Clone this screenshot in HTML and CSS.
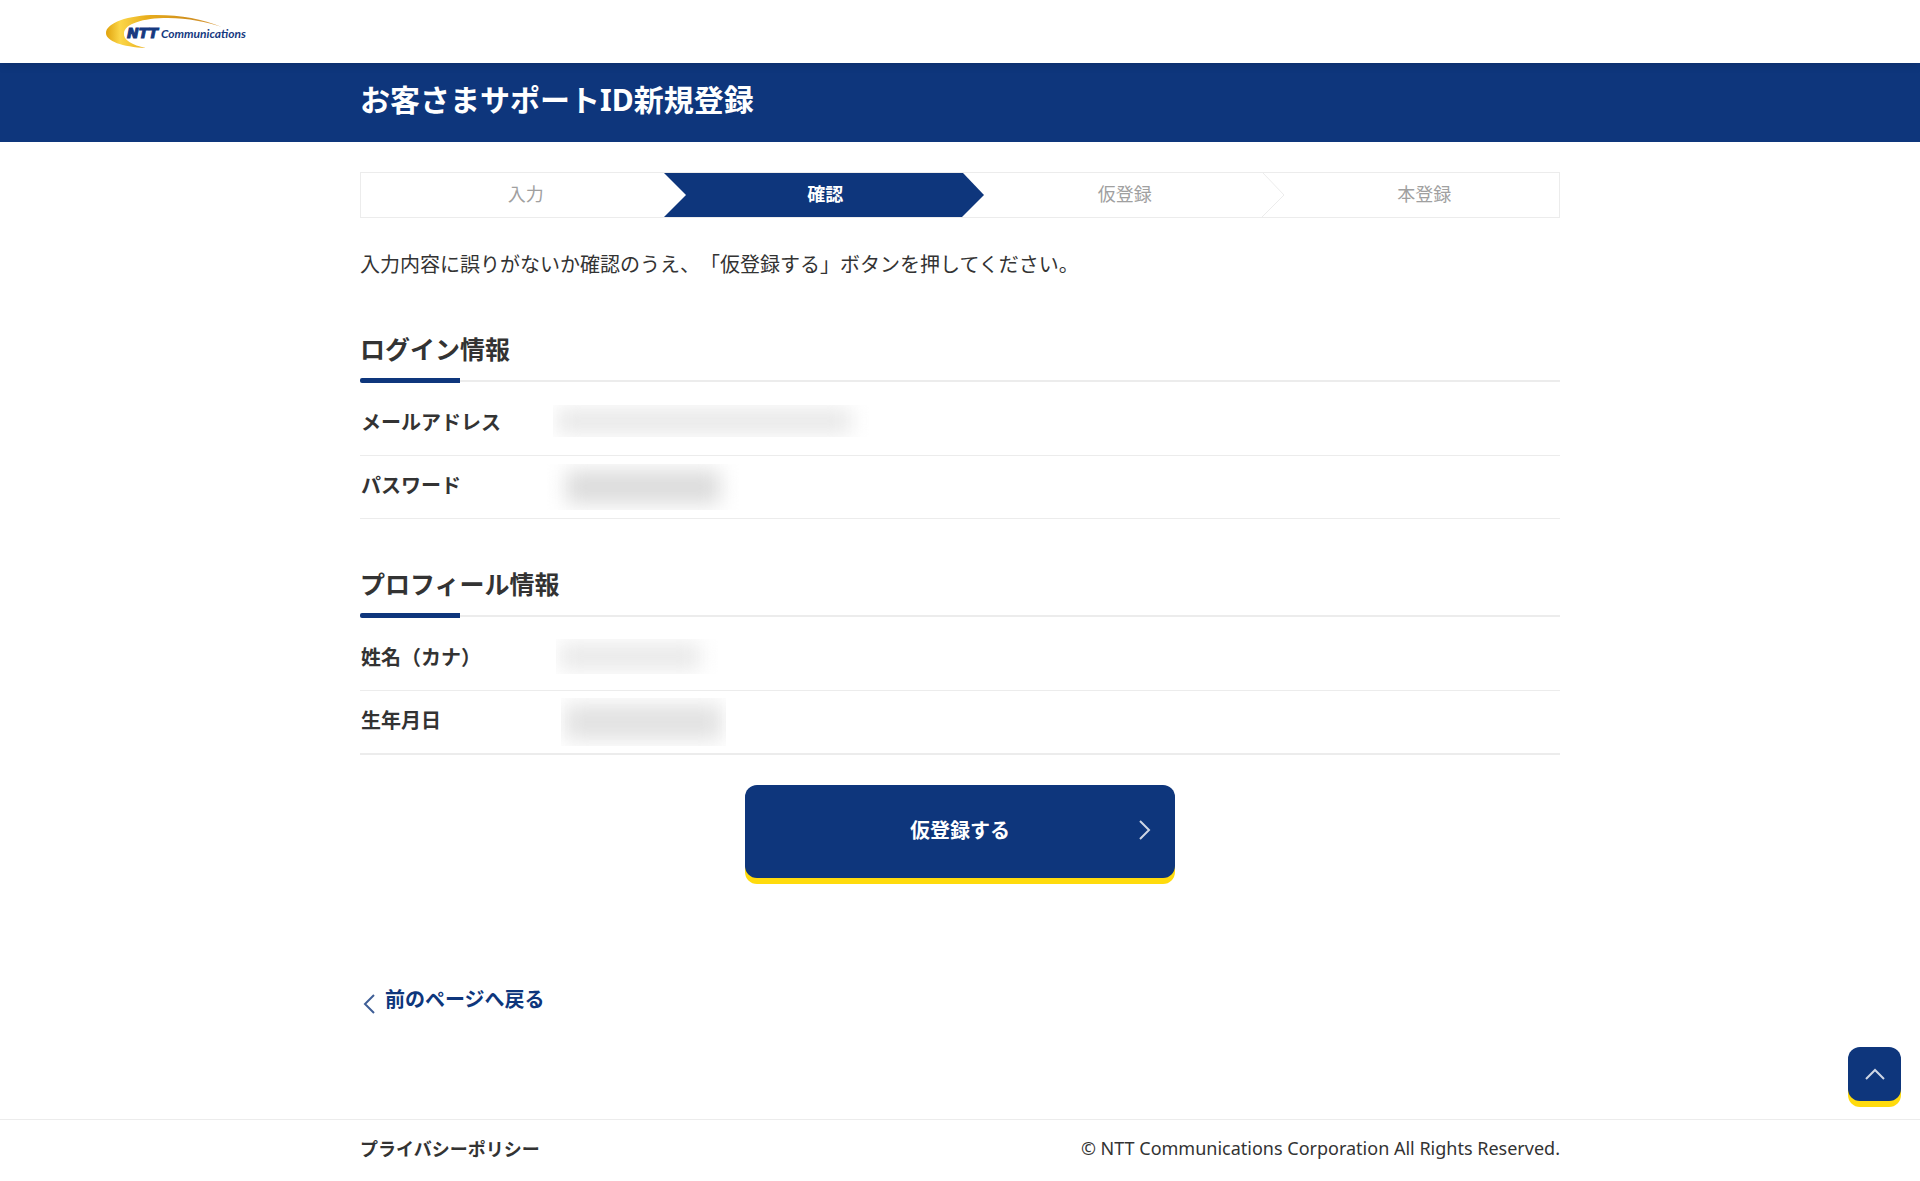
FILE: index.html
```html
<!DOCTYPE html>
<html lang="ja">
<head>
    <meta charset="UTF-8">
    <meta name="viewport" content="width=device-width, initial-scale=1.0">
    <title>お客さまサポートID新規登録</title>
    <link rel="stylesheet" href="styles.css">
</head>
<body>

    <!-- Site Header -->
    <header class="site-header">
        <a href="#" class="logo" aria-label="NTT Communications">
            <svg width="140" height="36" viewBox="0 0 140 36">
                <defs>
                    <linearGradient id="gold" x1="0" y1="0" x2="1" y2="0">
                        <stop offset="0" stop-color="#e0a20c"/>
                        <stop offset="0.12" stop-color="#fbd648"/>
                        <stop offset="0.35" stop-color="#e9ae1c"/>
                        <stop offset="0.7" stop-color="#d08f1c"/>
                        <stop offset="1" stop-color="#dba04a"/>
                    </linearGradient>
                </defs>
                <path fill="url(#gold)" d="M116 13 C96 5 76 1 50 1 C22 1 0 9 0 19 C0 27 16 33 40 34 C26 31 17 26 18 19 C19 10 36 4 62 4 C82 4 101 8 116 13 Z"/>
                <text class="logo-ntt" x="21" y="24">NTT</text>
                <text class="logo-com" x="55" y="24">Communications</text>
            </svg>
        </a>
    </header>

    <!-- Page Title -->
    <div class="page-title">
        <h1 class="inner">お客さまサポートID新規登録</h1>
    </div>

    <main class="inner">
        <!-- Steps -->
        <ol class="steps">
            <li>入力
                <svg class="step-arrow" width="26" height="44" viewBox="0 0 26 44"><path fill="#fff" d="M0 0H3L25 22L3 44H0Z"/></svg>
            </li>
            <li class="active" aria-current="step">確認
                <svg class="step-arrow" width="26" height="44" viewBox="0 0 26 44"><path fill="#0e367c" d="M0 0H3L24 22L2 44H0Z"/></svg>
            </li>
            <li>仮登録
                <svg class="step-arrow" width="26" height="44" viewBox="0 0 26 44"><path fill="none" stroke="#ececec" d="M3 0L24 22L2 44"/></svg>
            </li>
            <li>本登録</li>
        </ol>

        <p class="lead">入力内容に誤りがないか確認のうえ、「仮登録する」ボタンを押してください。</p>

        <form action="#" method="post">
            <!-- Login Info -->
            <section>
                <h2>ログイン情報</h2>
                <table>
                    <tr>
                        <th scope="row">メールアドレス</th>
                        <td><span class="mask mask-mail"></span></td>
                    </tr>
                    <tr>
                        <th scope="row">パスワード</th>
                        <td><span class="mask mask-password"></span></td>
                    </tr>
                </table>
            </section>

            <!-- Profile Info -->
            <section>
                <h2>プロフィール情報</h2>
                <table class="last">
                    <tr>
                        <th scope="row">姓名（カナ）</th>
                        <td><span class="mask mask-name"></span></td>
                    </tr>
                    <tr>
                        <th scope="row">生年月日</th>
                        <td><span class="mask mask-birth"></span></td>
                    </tr>
                </table>
            </section>

            <button type="submit" class="submit-btn">
                <span>仮登録する</span>
                <svg class="chevron" width="12" height="20" viewBox="0 0 12 20"><path d="M1 1L10 10L1 19"/></svg>
            </button>
        </form>

        <a href="#" class="back-link">
            <svg class="chevron" width="12" height="20" viewBox="0 0 12 20"><path d="M11 1L2 10L11 19"/></svg>
            <span>前のページへ戻る</span>
        </a>
    </main>

    <!-- Footer -->
    <footer>
        <div class="inner footer-inner">
            <a href="#">プライバシーポリシー</a>
            <small>© NTT Communications Corporation All Rights Reserved.</small>
        </div>
    </footer>

    <a href="#" class="page-top" aria-label="ページトップへ">
        <svg class="chevron" width="20" height="12" viewBox="0 0 20 12"><path d="M1 11L10 2L19 11"/></svg>
    </a>

</body>
</html>
```
FILE: styles.css
```css
*,
*::before,
*::after {
    box-sizing: border-box;
}

body {
    margin: 0;
    font-family: "Noto Sans CJK JP", sans-serif;
    font-size: 20px;
    line-height: 30px;
    text-spacing-trim: space-all;
    color: #333;
    background: #fff;
    min-height: 100vh;
    display: flex;
    flex-direction: column;
}

a {
    color: inherit;
    text-decoration: none;
}

.inner {
    width: 100%;
    max-width: 1200px;
    margin: 0 auto;
}

.chevron {
    fill: none;
    stroke: currentColor;
    stroke-width: 2;
    stroke-opacity: 0.8;
}

/* Site Header */
.site-header {
    position: relative;
    z-index: 1;
    height: 63px;
    padding: 14px 106px 0;
    background: #fff;
    box-shadow: 0 0 10px rgba(0, 0, 0, 0.2);
}

.logo svg {
    display: block;
}

.logo-ntt {
    font: italic bold 14px "DejaVu Sans", sans-serif;
    fill: #16397f;
    stroke: #16397f;
}

.logo-com {
    font: italic bold 12px Lato, sans-serif;
    fill: #16397f;
}

/* Page Title */
.page-title {
    background: #0e367c;
    color: #fff;
    padding: 14px 0 20px;
}

.page-title h1 {
    font-family: "Noto Sans", "Noto Sans CJK JP", sans-serif;
    font-size: 30px;
    line-height: 45px;
}

/* Steps */
.steps {
    list-style: none;
    display: flex;
    margin: 30px 0 31px;
    padding: 0;
    border: 1px solid #ececec;
    font-size: 18px;
    line-height: 40px;
    color: #a0a0a0;
}

.steps li {
    position: relative;
    flex: 1;
    height: 44px;
    padding-left: 30px;
    text-align: center;
}

.steps .active {
    background: #0e367c;
    color: #fff;
    font-weight: bold;
}

.step-arrow {
    position: absolute;
    top: 0;
    left: 100%;
    z-index: 1;
}

.lead {
    margin: 0 0 51px;
}

/* Sections */
section {
    margin-bottom: 46px;
}

h2 {
    position: relative;
    margin: 0 0 11px;
    padding-bottom: 14px;
    font-size: 25px;
    line-height: 36px;
    border-bottom: 2px solid #ececec;
}

h2::after {
    content: "";
    position: absolute;
    left: 0;
    bottom: -3px;
    width: 100px;
    height: 5px;
    background: #0e367c;
    border-radius: 2px 0 0 2px;
}

table {
    width: 100%;
    border-collapse: separate;
    border-spacing: 0;
}

th,
td {
    height: 63px;
    padding: 0;
    border-bottom: 1px solid #ececec;
}

th {
    width: 186px;
    padding: 0 0 5px 1px;
    text-align: left;
}

.last tr:last-child > * {
    height: 64px;
    border-bottom-width: 2px;
}

/* Hidden personal data */
.mask {
    display: block;
    overflow: hidden;
}

.mask::before {
    content: "";
    display: block;
    height: 100%;
    border: 4px solid transparent;
    background: #e7e7e7;
    background-clip: padding-box;
    filter: blur(10px);
}

.mask-mail {
    width: 318px;
    height: 32px;
    margin: 0 0 6px 7px;
}

.mask-mail::before {
    border-right-width: 20px;
}

.mask-password {
    width: 194px;
    height: 46px;
}

.mask-password::before {
    border-width: 6px 20px;
    background-color: #dcdcdc;
}

.mask-name {
    width: 168px;
    height: 35px;
    margin: 0 0 6px 10px;
}

.mask-name::before {
    border-right-width: 24px;
    background-color: #e9e9e9;
}

.mask-birth {
    width: 165px;
    height: 48px;
    margin-left: 15px;
}

.mask-birth::before {
    border-width: 6px 4px;
    background-color: #e2e2e2;
}

/* Buttons */
.submit-btn {
    display: flex;
    align-items: center;
    justify-content: center;
    position: relative;
    width: 430px;
    height: 93px;
    margin: -16px auto 0;
    padding: 0 0 4px;
    border: none;
    border-radius: 12px;
    background: #0e367c;
    box-shadow: 0 6px 0 #ffdb0d;
    color: #fff;
    font: bold 20px "Noto Sans CJK JP", sans-serif;
    cursor: pointer;
}

.submit-btn .chevron {
    position: absolute;
    right: 24px;
}

.back-link {
    display: inline-flex;
    align-items: flex-end;
    gap: 10px;
    margin: 106px 0 105px;
    padding-left: 3px;
    color: #0e367c;
    font-weight: bold;
}

.page-top {
    position: fixed;
    right: 19px;
    bottom: 80px;
    display: flex;
    align-items: center;
    justify-content: center;
    width: 53px;
    height: 54px;
    border-radius: 12px;
    background: #0e367c;
    box-shadow: 0 6px 0 #ffdb0d;
    color: #fff;
}

/* Footer */
footer {
    border-top: 1px solid #ececec;
    padding: 13px 0 17px;
}

.footer-inner {
    display: flex;
    justify-content: space-between;
}

.footer-inner a {
    font-size: 18px;
    font-weight: bold;
}

.footer-inner small {
    font-family: "Noto Sans", sans-serif;
    font-size: 18px;
}
```
